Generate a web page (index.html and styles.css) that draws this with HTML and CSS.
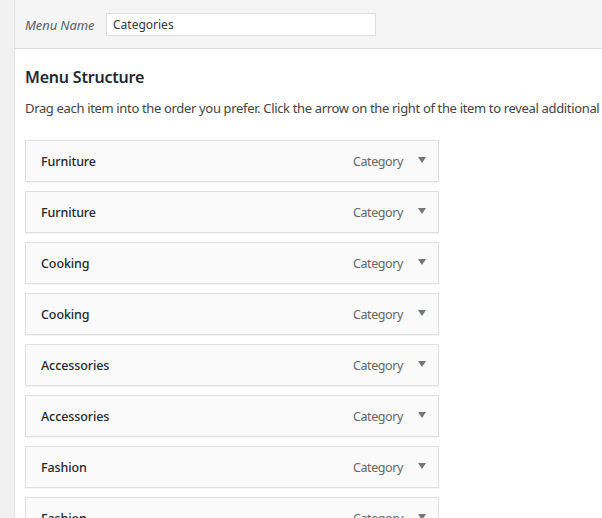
FILE: index.html
```html
<!DOCTYPE html>
<html>
<head>
<meta charset="utf-8">
<link rel="stylesheet" href="styles.css">
</head>
<body>
<div class="page">
  <div class="gutter"></div>
  <div class="main">
    <div class="header">
      <label class="name-label">Menu Name</label>
      <div class="name-input">Categories</div>
    </div>
    <div class="body">
      <h2 class="title">Menu Structure</h2>
      <p class="desc">Drag each item into the order you prefer. Click the arrow on the right of the item to reveal additional</p>
      <ul class="items">
        <li class="item"><span class="item-title">Furniture</span><span class="item-type">Category</span><span class="arrow"></span></li>
        <li class="item"><span class="item-title">Furniture</span><span class="item-type">Category</span><span class="arrow"></span></li>
        <li class="item"><span class="item-title">Cooking</span><span class="item-type">Category</span><span class="arrow"></span></li>
        <li class="item"><span class="item-title">Cooking</span><span class="item-type">Category</span><span class="arrow"></span></li>
        <li class="item"><span class="item-title">Accessories</span><span class="item-type">Category</span><span class="arrow"></span></li>
        <li class="item"><span class="item-title">Accessories</span><span class="item-type">Category</span><span class="arrow"></span></li>
        <li class="item"><span class="item-title">Fashion</span><span class="item-type">Category</span><span class="arrow"></span></li>
        <li class="item"><span class="item-title">Fashion</span><span class="item-type">Category</span><span class="arrow"></span></li>
      </ul>
    </div>
  </div>
</div>
</body>
</html>
```
FILE: styles.css
```css
html, body {
  margin: 0;
  padding: 0;
  background: #ffffff;
  overflow: hidden;
}
body {
  font-family: "Segoe UI", "Noto Sans", "Open Sans", sans-serif;
  font-size: 13px;
  color: #23282d;
  width: 602px;
  height: 518px;
}
.page {
  display: flex;
  height: 518px;
}
.gutter {
  width: 14px;
  flex: none;
  background: #f1f1f1;
  border-right: 1px solid #e3e3e3;
}
.main {
  flex: 1;
  min-width: 0;
  white-space: nowrap;
}
.header {
  height: 49px;
  box-sizing: border-box;
  background: #f5f5f5;
  border-bottom: 1px solid #dddddd;
  display: flex;
  align-items: center;
  padding: 1px 0 0 10px;
}
.name-label {
  font-style: italic;
  color: #555d66;
  width: 81px;
  letter-spacing: -0.1px;
}
.name-input {
  width: 270px;
  height: 23px;
  box-sizing: border-box;
  border: 1px solid #dddddd;
  background: #fff;
  padding: 0 0 0 6px;
  line-height: 21px;
  color: #32373c;
  font-size: 12px;
}
.body {
  padding: 16px 0 0 10px;
}
.title {
  margin: 0;
  font-size: 16px;
  font-weight: 600;
  line-height: 24px;
  letter-spacing: -0.2px;
  color: #23282d;
}
.desc {
  margin: 9px 0 0 0;
  line-height: 20px;
  color: #444;
  letter-spacing: -0.34px;
}
.items {
  list-style: none;
  margin: 22px 0 0 0;
  padding: 0;
  width: 414px;
  display: flex;
  flex-direction: column;
  gap: 9px;
}
.item {
  height: 42px;
  box-sizing: border-box;
  border: 1px solid #dfdfdf;
  background: #fafafa;
  display: flex;
  align-items: center;
  padding: 0 12px 0 15px;
  box-shadow: 0 1px 1px rgba(0,0,0,0.04);
}
.item-title {
  flex: 1;
  font-weight: 500;
  font-size: 12.5px;
  letter-spacing: -0.1px;
  color: #23282d;
}
.item-type {
  color: #666;
  font-size: 12.5px;
  letter-spacing: -0.4px;
  margin-right: 15px;
}
.arrow {
  width: 0;
  height: 0;
  border-left: 4px solid transparent;
  border-right: 4px solid transparent;
  border-top: 6px solid #72777c;
  margin-bottom: 2px;
}
```
